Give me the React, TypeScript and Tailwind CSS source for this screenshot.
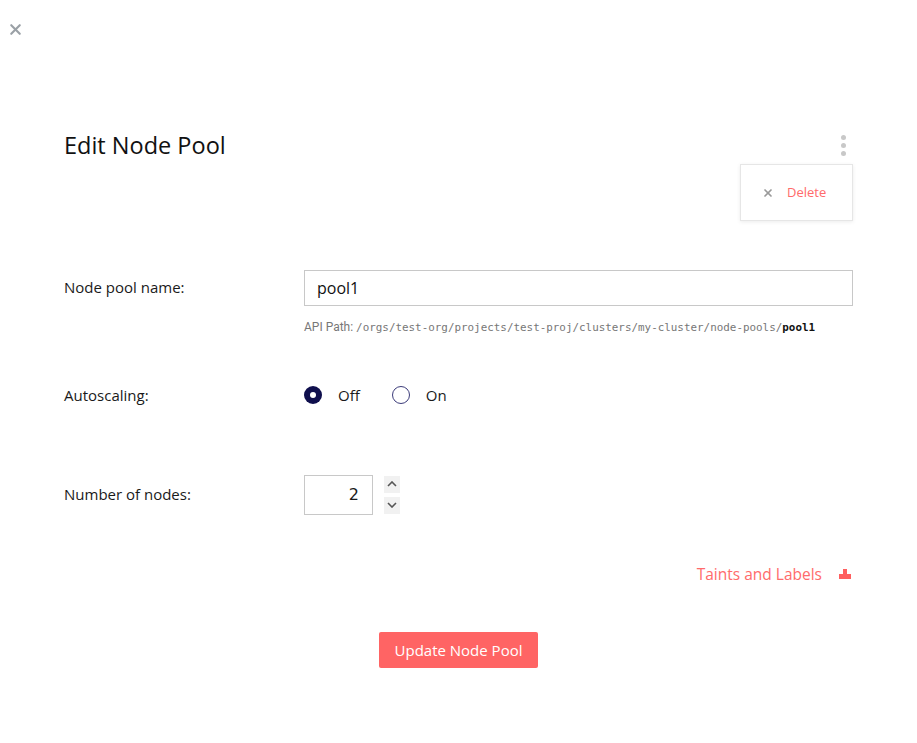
import { X } from 'lucide-react';

const font = { fontFamily: '"Open Sans", Lato, sans-serif' };

const App = () => {
  return (
    <div className="relative min-h-screen w-full bg-white text-[#1a1a1a]" style={font}>
      {/* Close */}
      <button className="absolute left-[7px] top-[21px] text-[#9aa0a6]">
        <X className="w-[17px] h-[17px]" strokeWidth={3} />
      </button>

      <div className="px-16 pt-[130px]">
        {/* Header */}
        <div className="relative flex items-center justify-between h-[30px]">
          <h1 className="text-[23.5px] font-normal text-[#111] leading-[30px] -mt-[1px]">Edit Node Pool</h1>
          <div className="flex flex-col gap-[3px] pr-[7px]">
            <span className="block w-[5px] h-[5px] rounded-full bg-[#c8c8c8]" />
            <span className="block w-[5px] h-[5px] rounded-full bg-[#c8c8c8]" />
            <span className="block w-[5px] h-[5px] rounded-full bg-[#c8c8c8]" />
          </div>

          {/* Dropdown */}
          <div className="absolute right-0 top-[34px] w-[113px] h-[57px] bg-white border border-[#e6e6e6] shadow-[0_1px_4px_rgba(0,0,0,0.08)] flex items-center pl-[21px] gap-[13px]">
            <X className="w-[12px] h-[12px] text-[#9a9a9a]" strokeWidth={3.5} />
            <span className="text-[13px] text-[#ff6b6b]">Delete</span>
          </div>
        </div>

        {/* Node pool name */}
        <div className="flex mt-[110px]">
          <div className="w-[240px] pt-[6px] text-[15px]">Node pool name:</div>
          <div className="flex-1">
            <input
              readOnly
              value="pool1"
              className="w-full h-[36px] border border-[#c8c8c8] px-[12px] text-[16px] text-[#111] outline-none"
              style={font}
            />
            <div className="mt-[13px] text-[12px] text-[#777] whitespace-nowrap leading-[16px]">
              <span style={{ fontFamily: 'Roboto, sans-serif' }}>API Path: </span>
              <span style={{ fontFamily: '"DejaVu Sans Mono", monospace' }} className="text-[10.9px]">
                /orgs/test-org/projects/test-proj/clusters/my-cluster/node-pools/
                <span className="font-bold text-[#111]">pool1</span>
              </span>
            </div>
          </div>
        </div>

        {/* Autoscaling */}
        <div className="flex items-center mt-[48px]">
          <div className="w-[240px] text-[15px]">Autoscaling:</div>
          <div className="flex items-center text-[15px]">
            <span className="w-[18px] h-[18px] rounded-full bg-[#0f0f4d] flex items-center justify-center">
              <span className="w-[6px] h-[6px] rounded-full bg-white" />
            </span>
            <span className="ml-[16px]">Off</span>
            <span className="ml-[32px] w-[18px] h-[18px] rounded-full border border-[#3c3c7a]" />
            <span className="ml-[16px]">On</span>
          </div>
        </div>

        {/* Number of nodes */}
        <div className="flex items-center mt-[68px]">
          <div className="w-[240px] text-[15px]">Number of nodes:</div>
          <div className="flex items-center">
            <div className="w-[69px] h-[40px] border border-[#c8c8c8] flex items-center justify-end pr-[13px] text-[16px]" style={{ fontFamily: '"DejaVu Sans", sans-serif' }}>
              2
            </div>
            <div className="ml-[11px] flex flex-col gap-[4px]">
              <span className="w-[16px] h-[17px] bg-[#f1f1f1] flex items-center justify-center">
                <svg width="10" height="6" viewBox="0 0 10 6" fill="none" stroke="#555" strokeWidth="1.6">
                  <path d="M1 5l4-4 4 4" />
                </svg>
              </span>
              <span className="w-[16px] h-[17px] bg-[#f1f1f1] flex items-center justify-center">
                <svg width="10" height="6" viewBox="0 0 10 6" fill="none" stroke="#555" strokeWidth="1.6">
                  <path d="M1 1l4 4 4-4" />
                </svg>
              </span>
            </div>
          </div>
        </div>

        {/* Taints and labels */}
        <div className="flex items-center justify-end mt-[48px] text-[#ff6b6b]">
          <span className="text-[15.5px]">Taints and Labels</span>
          <svg className="ml-[17px] mr-[2px]" width="12" height="10" viewBox="0 0 12 10" fill="#ff5f5f">
            <rect x="0" y="5" width="12" height="5" />
            <rect x="4" y="0" width="4" height="6" />
          </svg>
        </div>

        {/* Submit */}
        <div className="flex justify-center mt-[46px]">
          <button className="h-[36px] px-[16px] rounded-[2px] bg-[#ff6464] text-white text-[15px]" style={font}>
            Update Node Pool
          </button>
        </div>
      </div>
    </div>
  );
};

export default App;
